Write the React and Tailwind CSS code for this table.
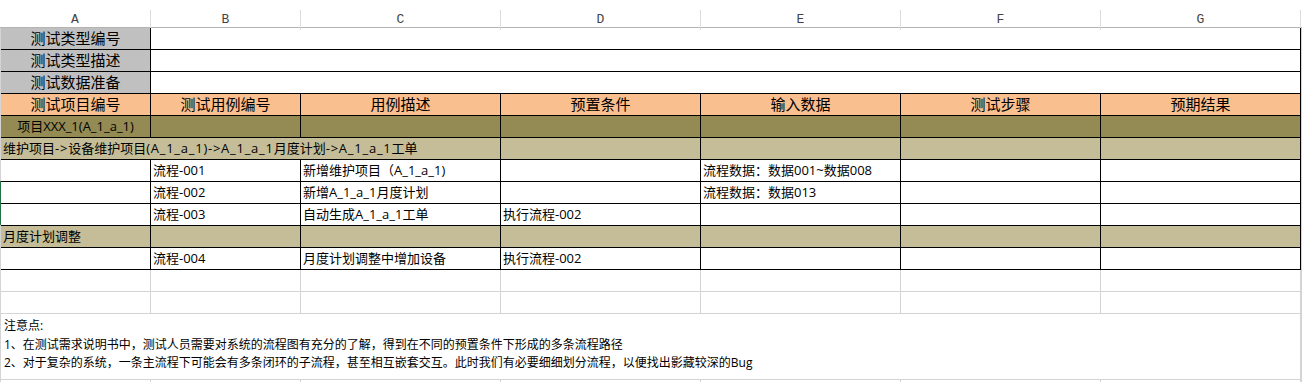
const COLS = ["A", "B", "C", "D", "E", "F", "G"];

// Latin from Open Sans (close to YaHei's latin), CJK falls back to Noto
const FONT = { fontFamily: '"Open Sans", "Noto Sans CJK SC", sans-serif' };

const HEAD = ["测试项目编号", "测试用例编号", "用例描述", "预置条件", "输入数据", "测试步骤", "预期结果"];

// rows of the case table: A..G text
const CASES = [
  { kind: "row", cells: ["", "流程-001", "新增维护项目（A_1_a_1)", "", "流程数据：数据001~数据008", "", ""] },
  { kind: "row", cells: ["", "流程-002", "新增A_1_a_1月度计划", "", "流程数据：数据013", "", ""] },
  { kind: "row", cells: ["", "流程-003", "自动生成A_1_a_1工单", "执行流程-002", "", "", ""] },
  { kind: "group", cells: ["月度计划调整", "", "", "", "", "", ""] },
  { kind: "row", cells: ["", "流程-004", "月度计划调整中增加设备", "执行流程-002", "", "", ""] },
];

const black = "border-r border-b border-black";
const grey = "border-r border-b border-[#d4d4d4]";

function Cell({ className = "", children, center }) {
  return (
    <div
      className={`h-[22px] flex items-center overflow-visible whitespace-nowrap text-[13px] text-black ${
        center ? "justify-center" : "pl-[2px]"
      } ${className}`}
    >
      {children}
    </div>
  );
}

// latin bits of the flow title run a little wider in the original
const L = ({ children }) => <span className="tracking-[0.75px]">{children}</span>;

export default function App() {
  return (
    <div className="w-[1302px] h-[382px] bg-white overflow-hidden" style={FONT}>
      {/* column letters */}
      <div className="pt-[10px]">
        <div className="grid grid-cols-[151px_150px_200px_200px_200px_200px_200px_1px] h-[18px] border-b border-[#b4b4b4]">
          {COLS.map((c) => (
            <div
              key={c}
              className="flex items-center justify-center border-r border-[#dcdcdc] text-[13px] text-[#444]"
              style={{ fontFamily: '"Liberation Mono", "DejaVu Sans Mono", monospace' }}
            >
              {c}
            </div>
          ))}
        </div>
      </div>

      <div className="relative w-[1302px] border-l border-r border-[#d4d4d4]">
        <div className="grid grid-cols-[150px_150px_200px_200px_200px_200px_200px]">
          {/* type info rows */}
          {["测试类型编号", "测试类型描述", "测试数据准备"].map((t) => (
            <div key={t} className="contents">
              <Cell center className={`${black} bg-[#c0c0c0] text-[15px]`}>
                {t}
              </Cell>
              <Cell className={`${black} col-span-6`} />
            </div>
          ))}

          {/* header */}
          {HEAD.map((h) => (
            <Cell key={h} center className={`${black} bg-[#f9bf8f] text-[15px]`}>
              {h}
            </Cell>
          ))}

          {/* project row */}
          <Cell center className={`${black} bg-[#948a54]`}>
            项目XXX_1(A_1_a_1)
          </Cell>
          {COLS.slice(1).map((c) => (
            <Cell key={c} className={`${black} bg-[#948a54]`} />
          ))}

          {/* flow title, text spills over A-C */}
          <Cell className={`${black} bg-[#c4bd97] col-span-3`}>
            维护项目<L>-&gt;</L>设备维护项目<L>(A_1_a_1)-&gt;A_1_a_1</L>月度计划<L>-&gt;A_1_a_1</L>工单
          </Cell>
          {COLS.slice(3).map((c) => (
            <Cell key={c} className={`${black} bg-[#c4bd97]`} />
          ))}

          {CASES.map((r, i) =>
            r.cells.map((t, j) => (
              <Cell
                key={`${i}-${j}`}
                className={`${black} ${r.kind === "group" ? "bg-[#c4bd97]" : "bg-white"}`}
              >
                {t}
              </Cell>
            ))
          )}

          {/* empty grid rows */}
          {[0, 1].map((i) =>
            COLS.map((c) => <Cell key={`e${i}${c}`} className={grey} />)
          )}

          {/* notes */}
          <div className={`${grey} col-span-7 h-[66px] pt-[3px] pl-[3px] text-[12px] leading-[18.5px] text-black`}>
            <div>注意点:</div>
            <div>1、在测试需求说明书中，测试人员需要对系统的流程图有充分的了解，得到在不同的预置条件下形成的多条流程路径</div>
            <div>2、对于复杂的系统，一条主流程下可能会有多条闭环的子流程，甚至相互嵌套交互。此时我们有必要细细划分流程，以便找出影藏较深的Bug</div>
          </div>

          {COLS.map((c) => (
            <Cell key={`z${c}`} className={grey} />
          ))}
        </div>

        {/* selection edge */}
        <div className="absolute left-[-1px] top-[153px] h-[44px] w-px bg-[#217346]" />
      </div>
    </div>
  );
}
